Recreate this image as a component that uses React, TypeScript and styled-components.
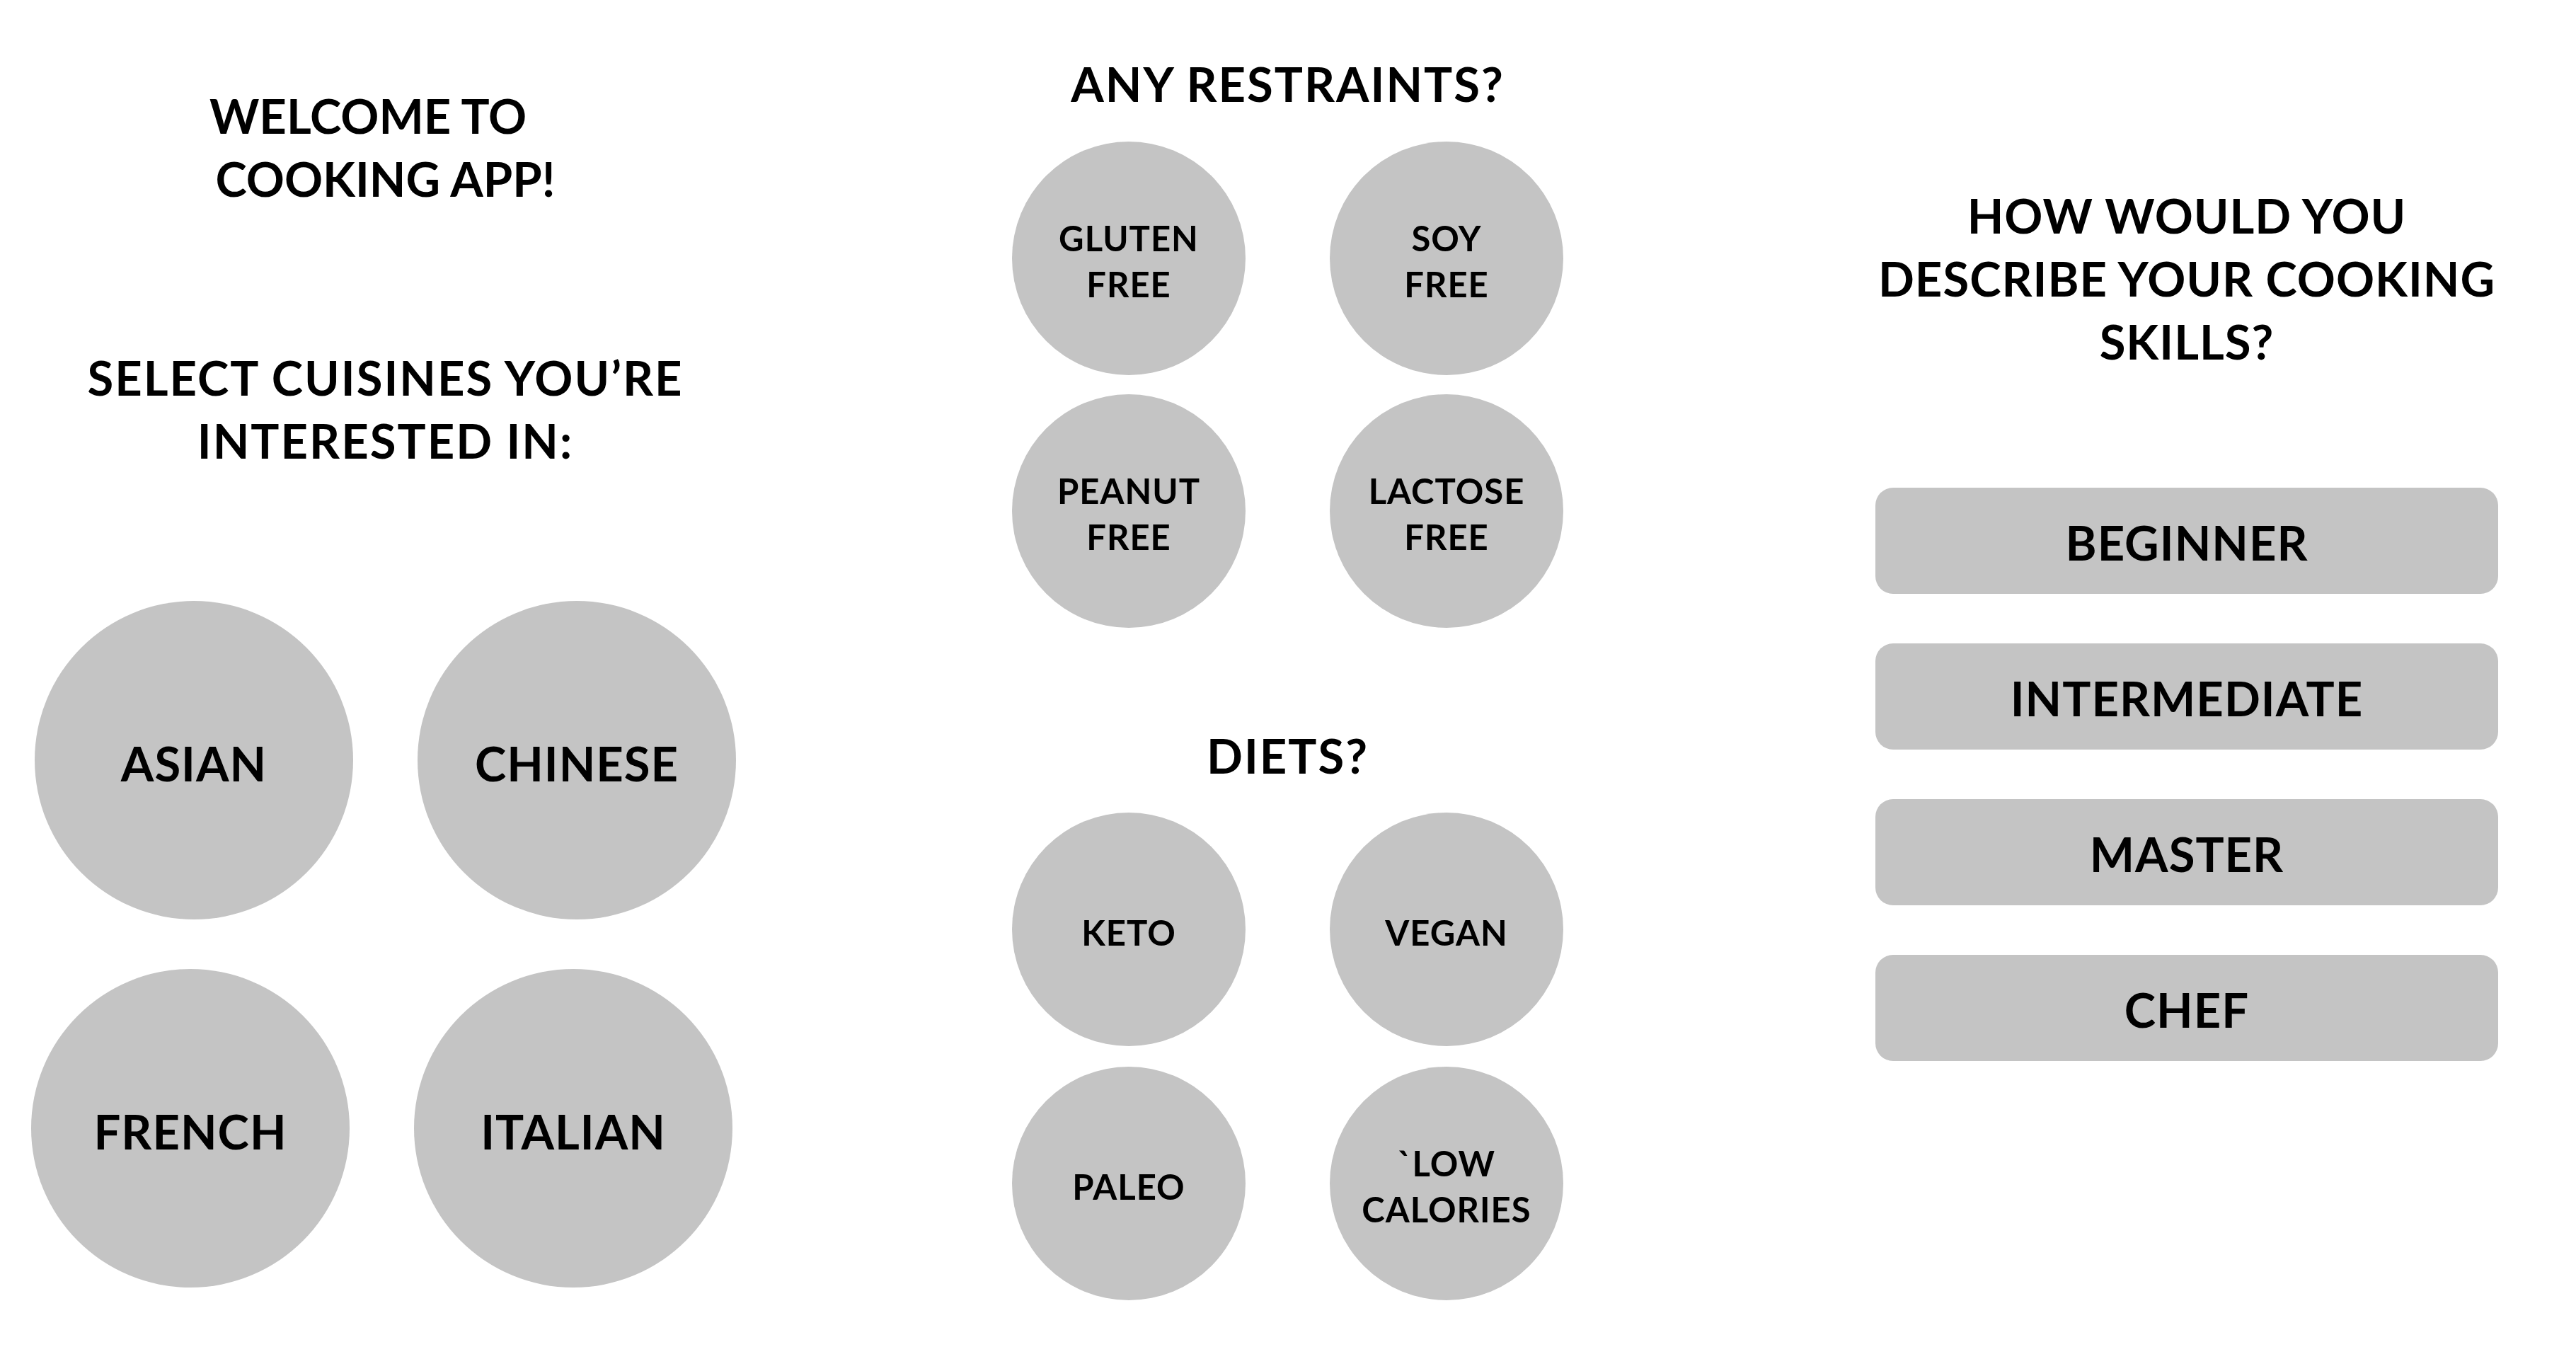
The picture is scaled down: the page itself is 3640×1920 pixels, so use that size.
import styled, { createGlobalStyle } from "styled-components";

const COLOR = {
  chip: "#c4c4c4",
  text: "#000000",
  white: "#ffffff",
};

const cuisines = ["ASIAN", "CHINESE", "FRENCH", "ITALIAN"];
const restraints = ["GLUTEN\nFREE", "SOY\nFREE", "PEANUT\nFREE", "LACTOSE\nFREE"];
const diets = ["KETO", "VEGAN", "PALEO", "`LOW\nCALORIES"];
const skills = ["BEGINNER", "INTERMEDIATE", "MASTER", "CHEF"];

const GlobalStyle = createGlobalStyle`
  html, body {
    margin: 0;
    padding: 0;
    background: ${COLOR.white};
  }
  body {
    font-family: "Lato", "Noto Sans", sans-serif;
    color: ${COLOR.text};
  }
`;

const App = () => {
  return (
    <>
      <GlobalStyle />
      <StyledPage>
        <StyledColumn width={989} top={119}>
          <StyledHeading spacing={0}>
            {"WELCOME TO\u00A0\u00A0\u00A0\nCOOKING APP!"}
          </StyledHeading>
          <StyledHeading spacing={2} style={{ marginTop: 192 }}>
            {"SELECT CUISINES YOU’RE\nINTERESTED IN:"}
          </StyledHeading>
          <StyledCircleGrid
            size={450}
            colGap={91}
            rowGap={70}
            top={182}
            shift={-5}
          >
            {cuisines.map((_) => (
              <StyledCircle key={_} size={450}>
                <StyledBigLabel>{_}</StyledBigLabel>
              </StyledCircle>
            ))}
          </StyledCircleGrid>
        </StyledColumn>

        <StyledColumn width={779} top={74} left={391}>
          <StyledHeading spacing={2}>ANY RESTRAINTS?</StyledHeading>
          <StyledCircleGrid size={330} colGap={119} rowGap={27} top={37}>
            {restraints.map((_) => (
              <StyledCircle key={_} size={330}>
                <StyledSmallLabel>{_}</StyledSmallLabel>
              </StyledCircle>
            ))}
          </StyledCircleGrid>
          <StyledHeading spacing={2} style={{ marginTop: 136 }}>
            DIETS?
          </StyledHeading>
          <StyledCircleGrid size={330} colGap={119} rowGap={29} top={36}>
            {diets.map((_) => (
              <StyledCircle key={_} size={330}>
                <StyledSmallLabel>{_}</StyledSmallLabel>
              </StyledCircle>
            ))}
          </StyledCircleGrid>
        </StyledColumn>

        <StyledColumn width={880} top={260} left={441}>
          <StyledHeading spacing={1}>
            {"HOW WOULD YOU\nDESCRIBE YOUR COOKING\nSKILLS?"}
          </StyledHeading>
          <StyledSkillList>
            {skills.map((_) => (
              <StyledSkillButton key={_}>{_}</StyledSkillButton>
            ))}
          </StyledSkillList>
        </StyledColumn>
      </StyledPage>
    </>
  );
};

export default App;

const StyledPage = styled.div`
  display: flex;
  align-items: flex-start;
  width: 3640px;
  min-height: 1920px;
  padding-left: 50px;
  box-sizing: border-box;
`;

const StyledColumn = styled.div<{ width: number; top: number; left?: number }>`
  display: flex;
  flex-direction: column;
  align-items: center;
  flex: 0 0 ${(props) => props.width}px;
  width: ${(props) => props.width}px;
  padding-top: ${(props) => props.top}px;
  margin-left: ${(props) => props.left ?? 0}px;
`;

const StyledHeading = styled.h1<{ spacing: number }>`
  margin: 0;
  font-size: 67px;
  line-height: 89px;
  font-weight: 700;
  text-align: center;
  white-space: pre-line;
  letter-spacing: ${(props) => props.spacing}px;
`;

const StyledCircleGrid = styled.div<{
  size: number;
  colGap: number;
  rowGap: number;
  top: number;
  shift?: number;
}>`
  display: grid;
  grid-template-columns: ${(props) => props.size}px ${(props) => props.size}px;
  column-gap: ${(props) => props.colGap}px;
  row-gap: ${(props) => props.rowGap}px;
  margin-top: ${(props) => props.top}px;

  & > :nth-child(n + 3) {
    margin-left: ${(props) => props.shift ?? 0}px;
  }
`;

const StyledCircle = styled.div<{ size: number }>`
  display: flex;
  align-items: center;
  justify-content: center;
  width: ${(props) => props.size}px;
  height: ${(props) => props.size}px;
  border-radius: 50%;
  background-color: ${COLOR.chip};
  cursor: pointer;
`;

const StyledBigLabel = styled.span`
  padding-top: 8px;
  font-size: 67px;
  line-height: 89px;
  font-weight: 700;
  letter-spacing: 1px;
`;

const StyledSmallLabel = styled.span`
  padding-top: 8px;
  font-size: 49px;
  line-height: 65px;
  font-weight: 700;
  text-align: center;
  white-space: pre-line;
  letter-spacing: 1px;
`;

const StyledSkillList = styled.div`
  display: flex;
  flex-direction: column;
  gap: 70px;
  width: 100%;
  margin-top: 162px;
`;

const StyledSkillButton = styled.div`
  display: flex;
  align-items: center;
  justify-content: center;
  height: 150px;
  padding-top: 4px;
  box-sizing: border-box;
  border-radius: 25px;
  background-color: ${COLOR.chip};
  font-size: 67px;
  font-weight: 700;
  letter-spacing: 1px;
  cursor: pointer;
`;
